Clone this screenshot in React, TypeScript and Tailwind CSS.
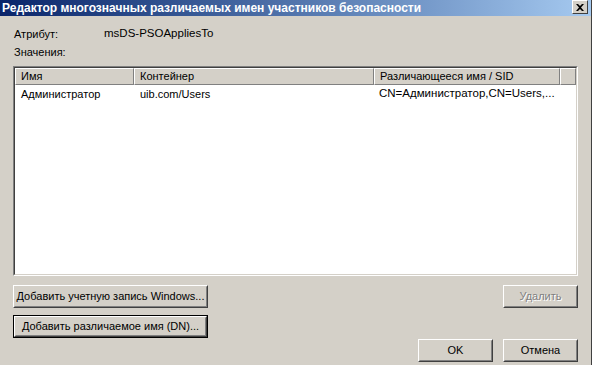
import React from "react";

const font = { fontFamily: '"Liberation Sans", Arial, sans-serif' };

function Btn({ children, focused, disabled, className }: { children: React.ReactNode; focused?: boolean; disabled?: boolean; className?: string }) {
  const inner = (
    <div className="h-full w-full border border-t-white border-l-white border-b-[#404040] border-r-[#404040]">
      <div className={`h-full w-full border border-t-[#d4d0c8] border-l-[#d4d0c8] border-b-[#808080] border-r-[#808080] flex items-center justify-center text-[11px] ${disabled ? "text-[#808080]" : "text-black"}`} style={disabled ? { textShadow: "1px 1px 0 #ffffff" } : undefined}>
        {children}
      </div>
    </div>
  );
  return (
    <div className={`${className ?? ""} ${focused ? "border border-black" : ""}`}>
      {inner}
    </div>
  );
}

export default function App() {
  return (
    <div className="w-[594px] h-[365px] bg-[#d4d0c8] overflow-hidden flex" style={font}>
      <div className="w-[591px] h-full flex flex-col">
        <div className="h-[16px] flex items-center justify-between bg-gradient-to-r from-[#0a246a] to-[#a6caf0]">
          <span className="pl-[2px] text-white font-bold text-[12px] leading-none whitespace-nowrap">Редактор многозначных различаемых имен участников безопасности</span>
          <div className="w-[16px] h-[14px] mr-[3px] mb-[2px] bg-[#d4d0c8] border border-t-white border-l-white border-b-[#404040] border-r-[#404040] flex items-center justify-center">
            <svg width="8" height="7" viewBox="0 0 8 7">
              <path d="M0 0h2l2 2 2-2h2L5 3.5 8 7H6L4 5 2 7H0l3-3.5z" fill="black" />
            </svg>
          </div>
        </div>
        <div className="flex-1 flex flex-col px-[13px] text-[11px] text-black">
          <div className="flex mt-[11px] h-[14px] items-center">
            <span className="w-[91px] pl-[1px]">Атрибут:</span>
            <span className="text-[11.5px]">msDS-PSOAppliesTo</span>
          </div>
          <div className="mt-[4px] h-[14px] flex items-center pl-[1px]">Значения:</div>
          <div className="mt-[7px] h-[210px] w-[565px] border border-t-[#808080] border-l-[#808080] border-b-white border-r-white">
            <div className="h-full w-full border border-t-[#404040] border-l-[#404040] border-b-[#d4d0c8] border-r-[#d4d0c8] bg-white flex flex-col">
              <div className="flex h-[17px] bg-[#d4d0c8]">
                {[
                  ["Имя", "w-[119px]"],
                  ["Контейнер", "w-[240px]"],
                  ["Различающееся имя / SID", "w-[186px]"],
                  ["", "flex-1"],
                ].map(([t, w], i) => (
                  <div key={i} className={`${w} h-full border-t border-l border-t-white border-l-white border-b border-r border-b-[#808080] border-r-[#808080] flex items-center pl-[5px]`}>
                    {t}
                  </div>
                ))}
              </div>
              <div className="flex h-[18px] items-center">
                <span className="w-[125px] pl-[6px]">Администратор</span>
                <span className="w-[239px]">uib.com/Users</span>
                <span className="whitespace-nowrap text-[11.5px]">CN=Администратор,CN=Users,...</span>
              </div>
            </div>
          </div>
          <div className="flex justify-between mt-[9px]">
            <Btn className="w-[195px] h-[23px]">Добавить учетную запись Windows...</Btn>
            <Btn className="w-[75px] h-[23px]" disabled>Удалить</Btn>
          </div>
          <div className="flex mt-[7px]">
            <Btn className="w-[195px] h-[23px]" focused>Добавить различаемое имя (DN)...</Btn>
          </div>
          <div className="flex justify-end gap-[10px] mt-[1px]">
            <Btn className="w-[75px] h-[23px]">OK</Btn>
            <Btn className="w-[75px] h-[23px]">Отмена</Btn>
          </div>
        </div>
      </div>
      <div className="w-[1px] h-full bg-[#404040]" />
      <div className="flex-1 h-full bg-[#ffffff]" />
    </div>
  );
}
